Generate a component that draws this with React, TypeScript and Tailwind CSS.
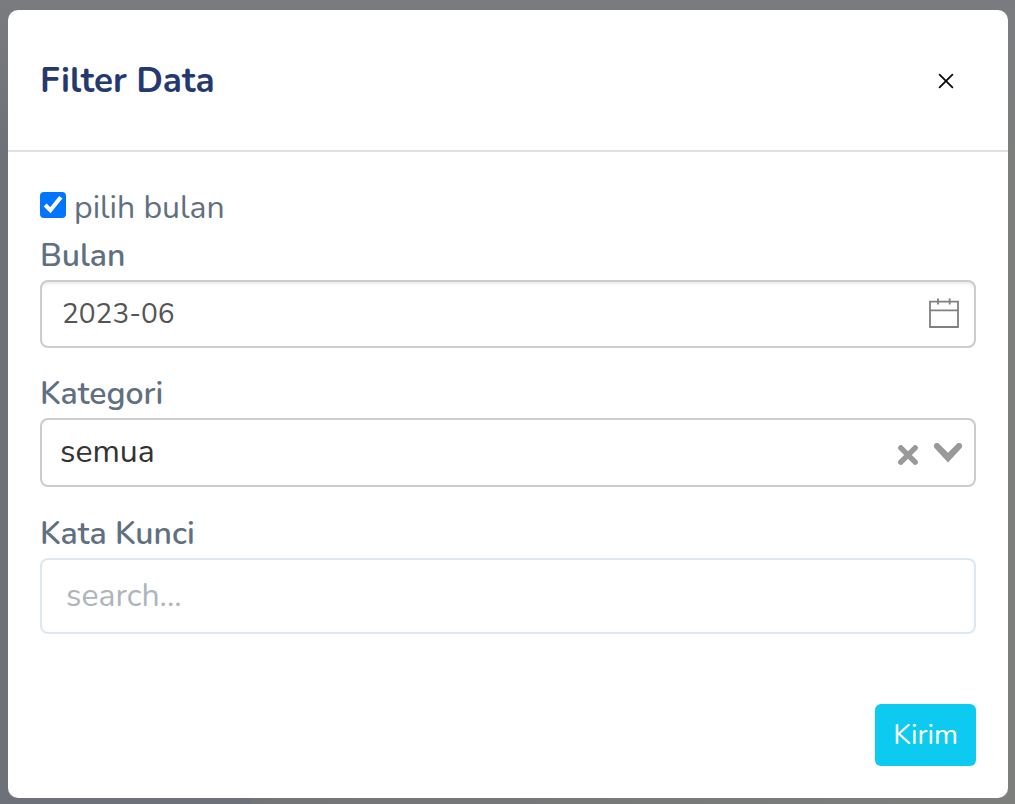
import { useState } from "react";

function CloseIcon() {
  return (
    <svg viewBox="0 0 16 16" className="size-4" fill="none" stroke="#0a0a0a" strokeWidth="1.8" strokeLinecap="round" aria-hidden="true">
      <path d="M1.6 1.6 14.4 14.4M14.4 1.6 1.6 14.4" />
    </svg>
  );
}

function CalendarIcon() {
  return (
    <svg viewBox="0 0 30 32" className="h-8 w-[30px]" fill="none" stroke="#808080" strokeWidth="1.8" aria-hidden="true">
      <path d="M1 3.7H29V29H1ZM1 12.3H29M9 .5V6.5M20.7 .5V6.5" />
    </svg>
  );
}

function ClearIcon() {
  return (
    <svg viewBox="0 0 20 20" className="size-5" fill="none" stroke="#999999" strokeWidth="5.4" strokeLinecap="round" aria-hidden="true">
      <path d="M2.8 2.8 17.2 17.2M17.2 2.8 2.8 17.2" />
    </svg>
  );
}

function ChevronIcon() {
  return (
    <svg viewBox="0 0 28 20" className="h-5 w-7" fill="#999999" aria-hidden="true">
      <path d="M.8 5.2A3 3 0 0 1 5.2.9L14 9.8 22.8.9A3 3 0 0 1 27.2 5.2L14 19.6Z" />
    </svg>
  );
}

export default function App() {
  const [useMonth, setUseMonth] = useState(true);
  const [month, setMonth] = useState("2023-06");
  const [category, setCategory] = useState("semua");
  const [keyword, setKeyword] = useState("");

  return (
    <div className="min-h-screen bg-[linear-gradient(to_bottom,#7a7b7f,#7a7b7f00_150px),linear-gradient(to_right,#6e717a_0,#6e717a_250px,#727476_250px,#7d7f7d_100%)] pt-2.5 pr-[7px] pb-1.5 pl-2 font-['Nunito','Lato',sans-serif] text-[32px] leading-[48px] text-[#607080]">
      <form
        role="dialog"
        aria-labelledby="filter-title"
        className="rounded-[10px] bg-white"
        onSubmit={(e) => e.preventDefault()}
      >
        <header className="flex items-center justify-between border-b-2 border-[#dee2e6] px-8 pt-[49px] pb-[47px]">
          <h1 id="filter-title" className="text-[35px] leading-[44px] font-bold text-[#25396f]">
            Filter Data
          </h1>
          <button type="button" aria-label="Tutup" className="px-[22px] py-1" onClick={() => setKeyword("")}>
            <CloseIcon />
          </button>
        </header>

        <div className="px-8 pt-8">
          <div className="flex items-start gap-2">
            <input
              id="use-month"
              type="checkbox"
              checked={useMonth}
              onChange={(e) => setUseMonth(e.target.checked)}
              className="mt-2 size-[26px] accent-[#0075ff] [clip-path:inset(0_round_4px)]"
            />
            <label htmlFor="use-month">pilih bulan</label>
          </div>

          <div>
            <label htmlFor="month" className="block font-semibold">
              Bulan
            </label>
            <div className="flex h-[68px] items-center rounded-lg border-2 border-[#cccccc] pr-[15px] pl-5 shadow-[inset_0_2px_2px_rgba(0,0,0,0.075)]">
              <input
                id="month"
                type="text"
                value={month}
                onChange={(e) => setMonth(e.target.value)}
                className="min-w-0 flex-1 bg-transparent text-[28px] text-[#555555] outline-none"
              />
              <CalendarIcon />
            </div>
          </div>

          <div className="mt-[22px]">
            <label htmlFor="category" className="block font-semibold">
              Kategori
            </label>
            <div className="flex h-[69px] items-center rounded-lg border-2 border-[#cccccc] pr-3 pl-[18px]">
              <select
                id="category"
                value={category}
                onChange={(e) => setCategory(e.target.value)}
                className="min-w-0 flex-1 appearance-none bg-transparent pb-0.5 text-[#333333] outline-none"
              >
                <option value="semua">semua</option>
                <option value="">-</option>
              </select>
              <button type="button" aria-label="Hapus pilihan" className="mr-4 pt-1" onClick={() => setCategory("")}>
                <ClearIcon />
              </button>
              <ChevronIcon />
            </div>
          </div>

          <div className="mt-[23px]">
            <label htmlFor="keyword" className="block font-semibold">
              Kata Kunci
            </label>
            <input
              id="keyword"
              type="text"
              placeholder="search..."
              value={keyword}
              onChange={(e) => setKeyword(e.target.value)}
              className="block h-[76px] w-full rounded-lg border-2 border-[#dce7f1] px-6 pb-0.5 text-[#607080] outline-none placeholder:text-[#adb5bd]"
            />
          </div>
        </div>

        <footer className="flex justify-end px-8 pt-[70px] pb-8">
          <button type="submit" className="h-[62px] rounded-md bg-[#0dcaf0] px-[18px] text-[28px] text-white">
            Kirim
          </button>
        </footer>
      </form>
    </div>
  );
}
